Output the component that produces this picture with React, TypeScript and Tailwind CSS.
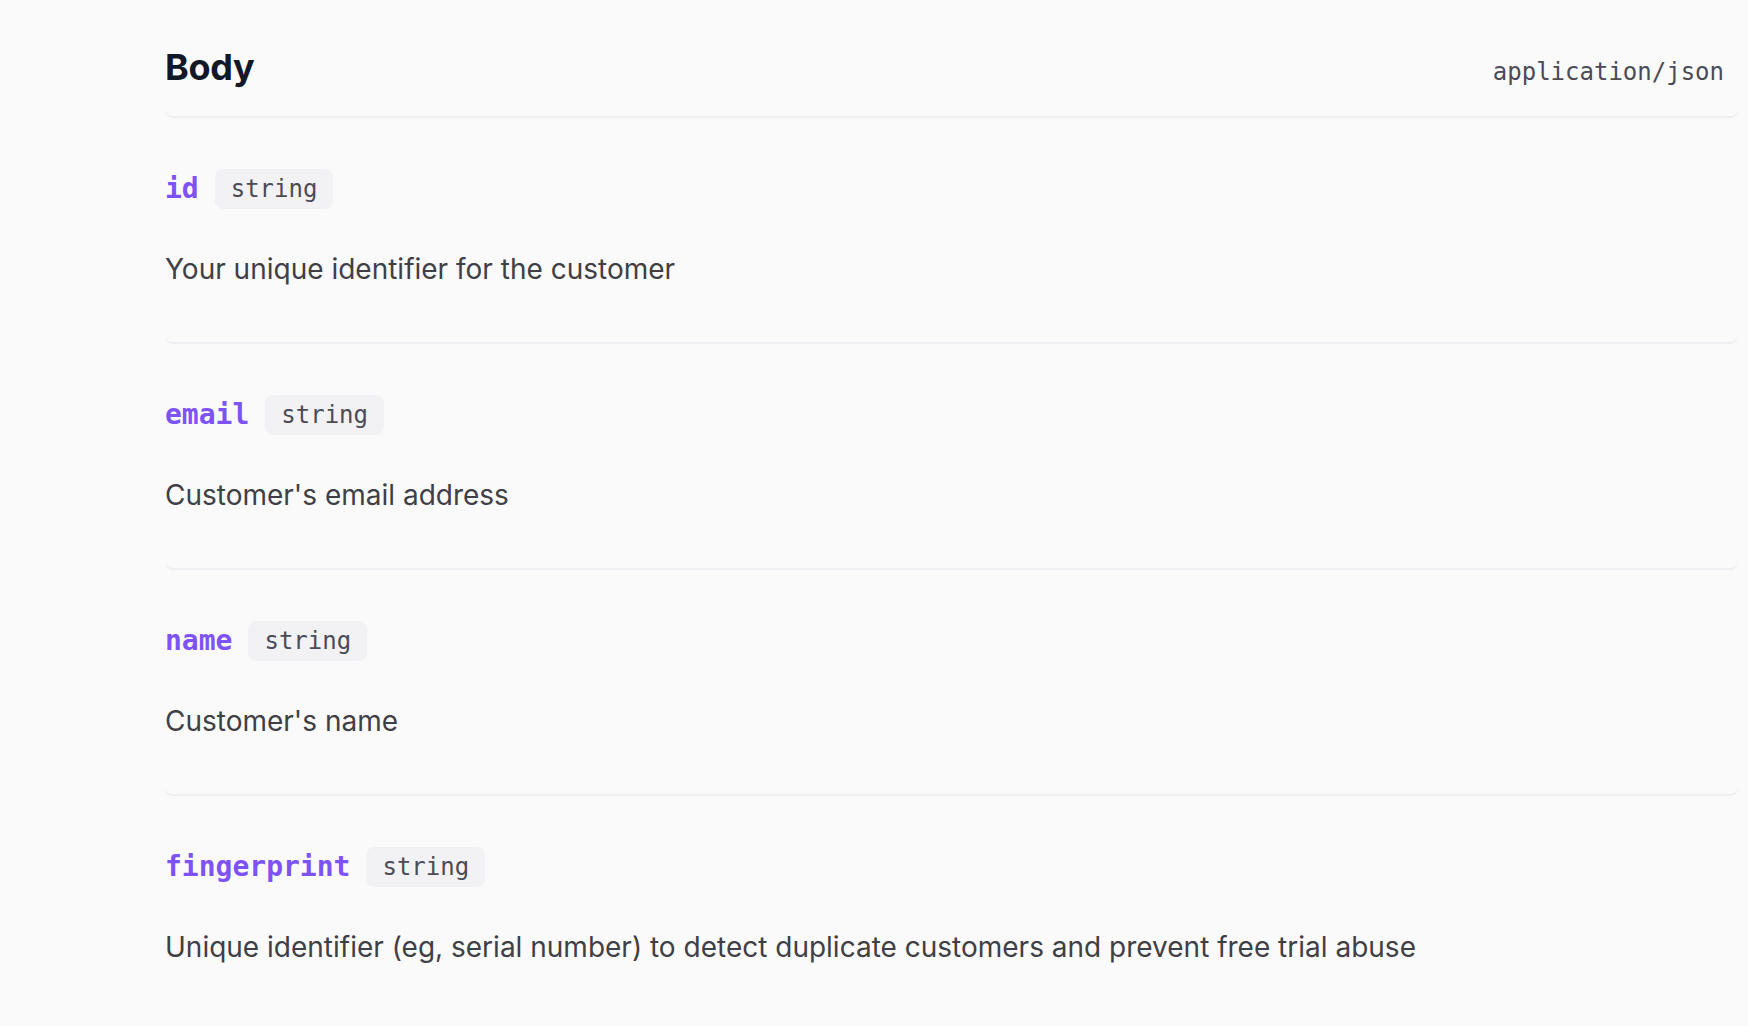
const FIELDS = [
  { name: "id", type: "string", desc: "Your unique identifier for the customer" },
  { name: "email", type: "string", desc: "Customer's email address" },
  { name: "name", type: "string", desc: "Customer's name" },
  {
    name: "fingerprint",
    type: "string",
    desc: "Unique identifier (eg, serial number) to detect duplicate customers and prevent free trial abuse",
  },
];

export default function App() {
  return (
    <div className="min-h-screen bg-[#fafafa] font-['Inter','Noto_Sans',sans-serif]">
      <div className="ml-[165px] mr-[10px]">
        {/* header */}
        <div className="flex items-baseline justify-between rounded-lg border-b-2 border-[#eeeef3] pt-[49px] pb-[26px]">
          <h2 className="text-[36px] leading-9 font-bold tracking-[-0.01em] text-[#111827]">Body</h2>
          <span className="pr-[14px] font-['DejaVu_Sans_Mono',monospace] text-[24px] text-[#4b4b55]">
            application/json
          </span>
        </div>

        {FIELDS.map((f, i) => (
          <div
            key={f.name}
            className={
              i < FIELDS.length - 1
                ? "rounded-lg border-b-2 border-[#eeeef3] pt-[51px] pb-[52px]"
                : "pt-[51px] pb-[52px]"
            }
          >
            <div className="flex h-10 items-center gap-4">
              <span className="font-['DejaVu_Sans_Mono',monospace] text-[28px] font-bold text-[#7d52f7]">{f.name}</span>
              <span className="rounded-lg bg-[#f2f2f5] px-4 py-1 font-['DejaVu_Sans_Mono',monospace] text-[24px] leading-8 text-[#4b4b55]">
                {f.type}
              </span>
            </div>
            <p className="mt-[39px] text-[28px] leading-[42px] text-[#3f3f46]">{f.desc}</p>
          </div>
        ))}
      </div>
    </div>
  );
}
